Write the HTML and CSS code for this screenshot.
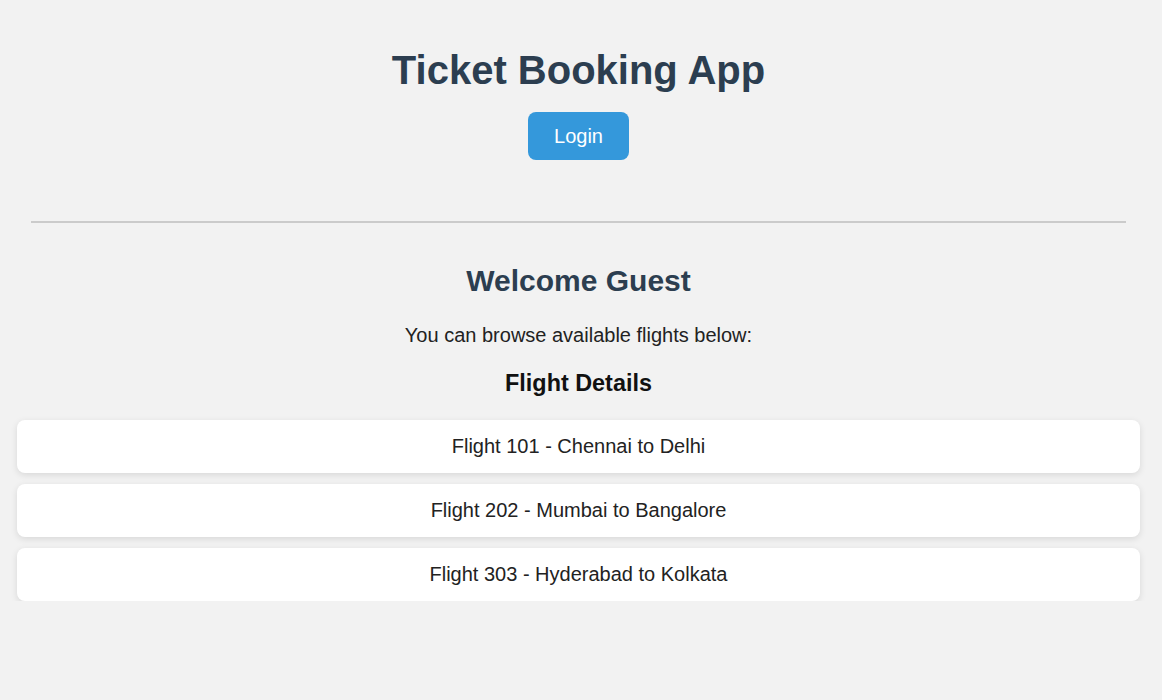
FILE: index.html
```html
<!DOCTYPE html>
<html lang="en">
<head>
<meta charset="utf-8">
<title>Ticket Booking App</title>
<link rel="stylesheet" href="styles.css">
</head>
<body>
  <header class="top">
    <h1 class="title">Ticket Booking App</h1>
    <button class="login-btn">Login</button>
  </header>
  <hr class="divider">
  <main class="content">
    <h2 class="welcome">Welcome Guest</h2>
    <p class="intro">You can browse available flights below:</p>
    <h3 class="section-title">Flight Details</h3>
    <div class="flight-list">
      <div class="flight-card">Flight 101 - Chennai to Delhi</div>
      <div class="flight-card">Flight 202 - Mumbai to Bangalore</div>
      <div class="flight-card">Flight 303 - Hyderabad to Kolkata</div>
    </div>
  </main>
</body>
</html>
```

FILE: styles.css
```css
html, body {
  margin: 0;
  background: #f2f2f2;
}

body {
  padding: 0 22px 0 17px;
  font-family: "Liberation Sans", Arial, sans-serif;
  color: #333;
  text-align: center;
}

.top {
  display: flex;
  flex-direction: column;
  align-items: center;
  padding-top: 47px;
}

.title {
  margin: 0 0 19px;
  font-size: 40px;
  line-height: 46px;
  font-weight: 700;
  color: #2c3e50;
}

.login-btn {
  display: block;
  margin: 0;
  border: none;
  border-radius: 8px;
  background: #3498db;
  color: #fff;
  font-family: "Liberation Sans", Arial, sans-serif;
  font-size: 20px;
  line-height: 24px;
  padding: 12px 26px;
  cursor: pointer;
}

.divider {
  margin: 61px 14px 0;
  height: 0;
  border: none;
  border-top: 2px solid #cbcbcb;
}

.content {
  display: flex;
  flex-direction: column;
}

.welcome {
  margin: 41px 0 0;
  font-size: 30px;
  line-height: 34px;
  font-weight: 700;
  color: #2c3e50;
}

.intro {
  margin: 26px 0 0;
  font-size: 20px;
  line-height: 23px;
  color: #222;
}

.section-title {
  margin: 23px 0 0;
  font-size: 23.4px;
  line-height: 27px;
  font-weight: 700;
  color: #111;
}

.flight-list {
  display: flex;
  flex-direction: column;
  gap: 11px;
  margin-top: 23px;
}

.flight-card {
  background: #fff;
  border-radius: 8px;
  padding: 15px;
  font-size: 20px;
  line-height: 23px;
  color: #222;
  box-shadow: 0 2px 7px rgba(0, 0, 0, 0.11);
}
```
